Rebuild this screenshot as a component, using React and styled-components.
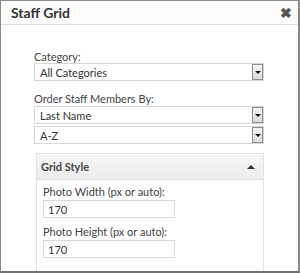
import React from 'react';
import styled, { createGlobalStyle } from 'styled-components';

const Global = createGlobalStyle`
  html, body { margin: 0; padding: 0; background: #fff; }
  body { font-family: Lato, "Open Sans", sans-serif; }
`;

const Dialog = styled.div`
  width: 300px;
  height: 273px;
  box-sizing: border-box;
  border: 1px solid #8a8a8a;
  border-bottom: 2px solid #6e6e6e;
  border-right: 2px solid #8a8a8a;
  display: flex;
  flex-direction: column;
  overflow: hidden;
  background: #fff;
`;

const Header = styled.div`
  height: 23px;
  flex: none;
  display: flex;
  align-items: center;
  justify-content: space-between;
  padding: 0 6px 0 10px;
  background: #fcfcfc;
  border-bottom: 1px solid #dedede;
`;

const Title = styled.h1`
  margin: 0;
  font-size: 14px;
  font-weight: 700;
  color: #333;
`;

const Close = styled.span`
  font-size: 14px;
  font-weight: 700;
  color: #555;
  line-height: 1;
`;

const Body = styled.div`
  flex: 1;
  padding: 26px 34px 0 33px;
`;

const Label = styled.div`
  font-size: 11px;
  color: #444;
  line-height: 12px;
  margin-bottom: ${p => p.gap ?? 1}px;
`;

const Field = styled.div`
  margin-bottom: ${p => p.gap || 0}px;
`;

const SelectBox = styled.div`
  height: 18px;
  box-sizing: border-box;
  border: 1px solid #d6d6d6;
  display: flex;
  align-items: center;
  justify-content: space-between;
  font-size: 11px;
  color: #333;
  padding-left: 5px;
  & + & {
    margin-top: 2px;
  }
`;

const Arrow = styled.span`
  width: 11px;
  height: 16px;
  box-sizing: border-box;
  border: 1px solid #8c8c8c;
  background: linear-gradient(#f4f4f4, #dcdcdc);
  display: flex;
  align-items: center;
  justify-content: center;
  &::after {
    content: '';
    border-left: 3px solid transparent;
    border-right: 3px solid transparent;
    border-top: 3px solid #111;
  }
`;

const Panel = styled.div`
  margin: 9px 0 0 2px;
  border: 1px solid #e2e2e2;
  border-bottom: none;
`;

const PanelHead = styled.div`
  height: 25px;
  display: flex;
  align-items: center;
  justify-content: space-between;
  padding: 0 8px 0 4px;
  background: linear-gradient(#f7f7f7, #ececec);
  border-bottom: 1px solid #dcdcdc;
  font-size: 11px;
  font-weight: 700;
  color: #444;
`;

const UpArrow = styled.span`
  border-left: 4px solid transparent;
  border-right: 4px solid transparent;
  border-bottom: 4px solid #333;
`;

const PanelBody = styled.div`
  padding: 6px 6px 14px 6px;
`;

const TextInput = styled.div`
  width: 132px;
  height: 18px;
  box-sizing: border-box;
  border: 1px solid #d9d9d9;
  font-size: 11px;
  color: #333;
  padding-left: 4px;
  display: flex;
  align-items: center;
  margin-bottom: 8px;
`;

const Select = ({ value }) => (
  <SelectBox>
    {value}
    <Arrow />
  </SelectBox>
);

export default function App() {
  return (
    <>
      <Global />
      <Dialog>
        <Header>
          <Title>Staff Grid</Title>
          <Close>✖</Close>
        </Header>
        <Body>
          <Field gap={12}>
            <Label gap={0}>Category:</Label>
            <Select value="All Categories" />
          </Field>
          <Field>
            <Label>Order Staff Members By:</Label>
            <Select value="Last Name" />
            <Select value="A-Z" />
          </Field>
          <Panel>
            <PanelHead>
              Grid Style
              <UpArrow />
            </PanelHead>
            <PanelBody>
              <Label gap={2}>Photo Width (px or auto):</Label>
              <TextInput>170</TextInput>
              <Label gap={2}>Photo Height (px or auto):</Label>
              <TextInput>170</TextInput>
            </PanelBody>
          </Panel>
        </Body>
      </Dialog>
    </>
  );
}
